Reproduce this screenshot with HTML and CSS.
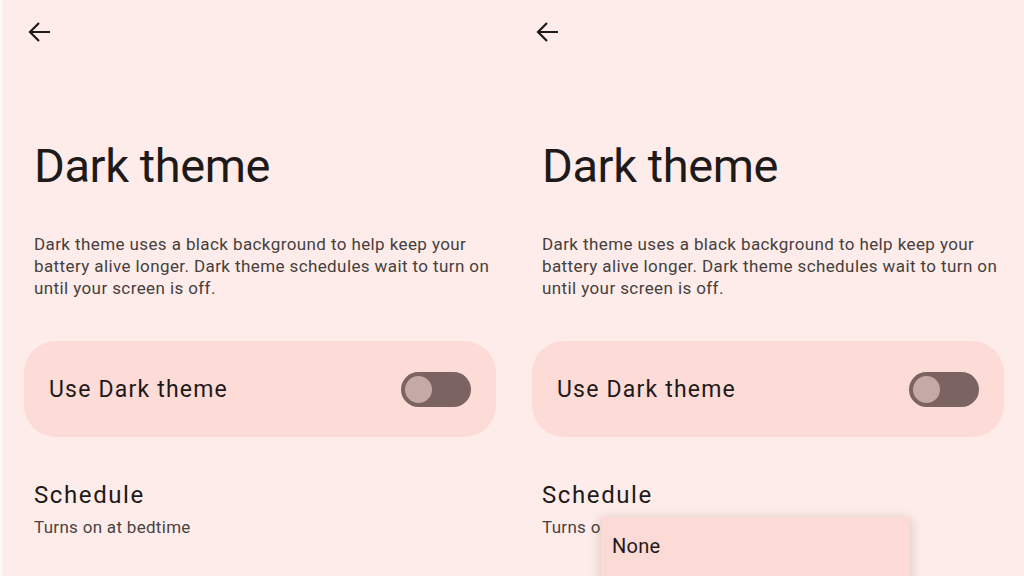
FILE: index.html
```html
<!DOCTYPE html>
<html lang="en">
<head>
    <meta charset="UTF-8">
    <meta name="viewport" content="width=device-width, initial-scale=1.0">
    <title>Dark theme</title>
    <link rel="stylesheet" href="styles.css">
</head>
<body>
    <div class="screens">
        <section class="screen">
            <div class="topbar">
                <svg class="back" viewBox="0 0 24 22" width="24" height="22"><path d="M22 11H2M11 2L2 11l9 9"/></svg>
            </div>
            <h1 class="title">Dark theme</h1>
            <p class="desc">Dark theme uses a black background to help keep your battery alive longer. Dark theme schedules wait to turn on until your screen is off.</p>
            <div class="card">
                <span class="card-label">Use Dark theme</span>
                <span class="switch"><span class="thumb"></span></span>
            </div>
            <div class="pref">
                <div class="pref-title">Schedule</div>
                <div class="pref-summary">Turns on at bedtime</div>
            </div>
        </section>
        <section class="screen">
            <div class="topbar">
                <svg class="back" viewBox="0 0 24 22" width="24" height="22"><path d="M22 11H2M11 2L2 11l9 9"/></svg>
            </div>
            <h1 class="title">Dark theme</h1>
            <p class="desc">Dark theme uses a black background to help keep your battery alive longer. Dark theme schedules wait to turn on until your screen is off.</p>
            <div class="card">
                <span class="card-label">Use Dark theme</span>
                <span class="switch"><span class="thumb"></span></span>
            </div>
            <div class="pref">
                <div class="pref-title">Schedule</div>
                <div class="pref-summary">Turns on at bedtime</div>
            </div>
            <div class="menu">
                <div class="menu-item">None</div>
            </div>
        </section>
    </div>
</body>
</html>
```

FILE: styles.css
```css
body {
    margin: 0;
    height: 576px;
    overflow: hidden;
    background: #fdece9;
    font-family: Roboto, "Noto Sans", sans-serif;
    color: #1e1a1a;
}
.screens {
    display: grid;
    grid-template-columns: 508px 516px;
    height: 576px;
}
.screen {
    position: relative;
    padding-left: 34px;
}
.screen:first-child {
    box-shadow: inset 3px 0 0 #fff7f5;
}
.topbar {
    height: 64px;
    display: flex;
    align-items: center;
}
.back {
    margin-left: -6px;
    fill: none;
    stroke: #1e1a1a;
    stroke-width: 2.2;
}
.title {
    margin: 74px 0 0;
    font-size: 47px;
    line-height: 56px;
    font-weight: 400;
    letter-spacing: -0.4px;
}
.desc {
    margin: 39px 0 0;
    width: 470px;
    font-size: 17px;
    line-height: 22px;
    letter-spacing: 0.4px;
    color: #463f3e;
}
.card {
    margin: 42px 0 0 -10px;
    width: 472px;
    height: 96px;
    box-sizing: border-box;
    padding: 0 25px;
    border-radius: 32px;
    background: #fddbd7;
    display: flex;
    align-items: center;
    justify-content: space-between;
}
.card-label {
    font-size: 23px;
    letter-spacing: 1.2px;
}
.switch {
    width: 70px;
    height: 35px;
    border-radius: 18px;
    background: #7b6361;
    display: flex;
    align-items: center;
    padding-left: 4px;
    box-sizing: border-box;
}
.thumb {
    width: 27px;
    height: 27px;
    border-radius: 50%;
    background: #c4a9a7;
}
.pref {
    margin-top: 43px;
}
.pref-title {
    font-size: 24px;
    line-height: 30px;
    letter-spacing: 1.6px;
}
.pref-summary {
    margin-top: 6px;
    font-size: 17px;
    line-height: 22px;
    letter-spacing: 0.3px;
    color: #4a4342;
}
.menu {
    position: absolute;
    left: 93px;
    top: 517px;
    width: 309px;
    height: 80px;
    background: #fcdad6;
    border-radius: 4px;
    box-shadow: 0 2px 12px rgba(80, 40, 40, 0.22);
}
.menu-item {
    padding: 17px 11px 0;
    font-size: 20px;
    line-height: 24px;
    letter-spacing: 0.3px;
}
```
